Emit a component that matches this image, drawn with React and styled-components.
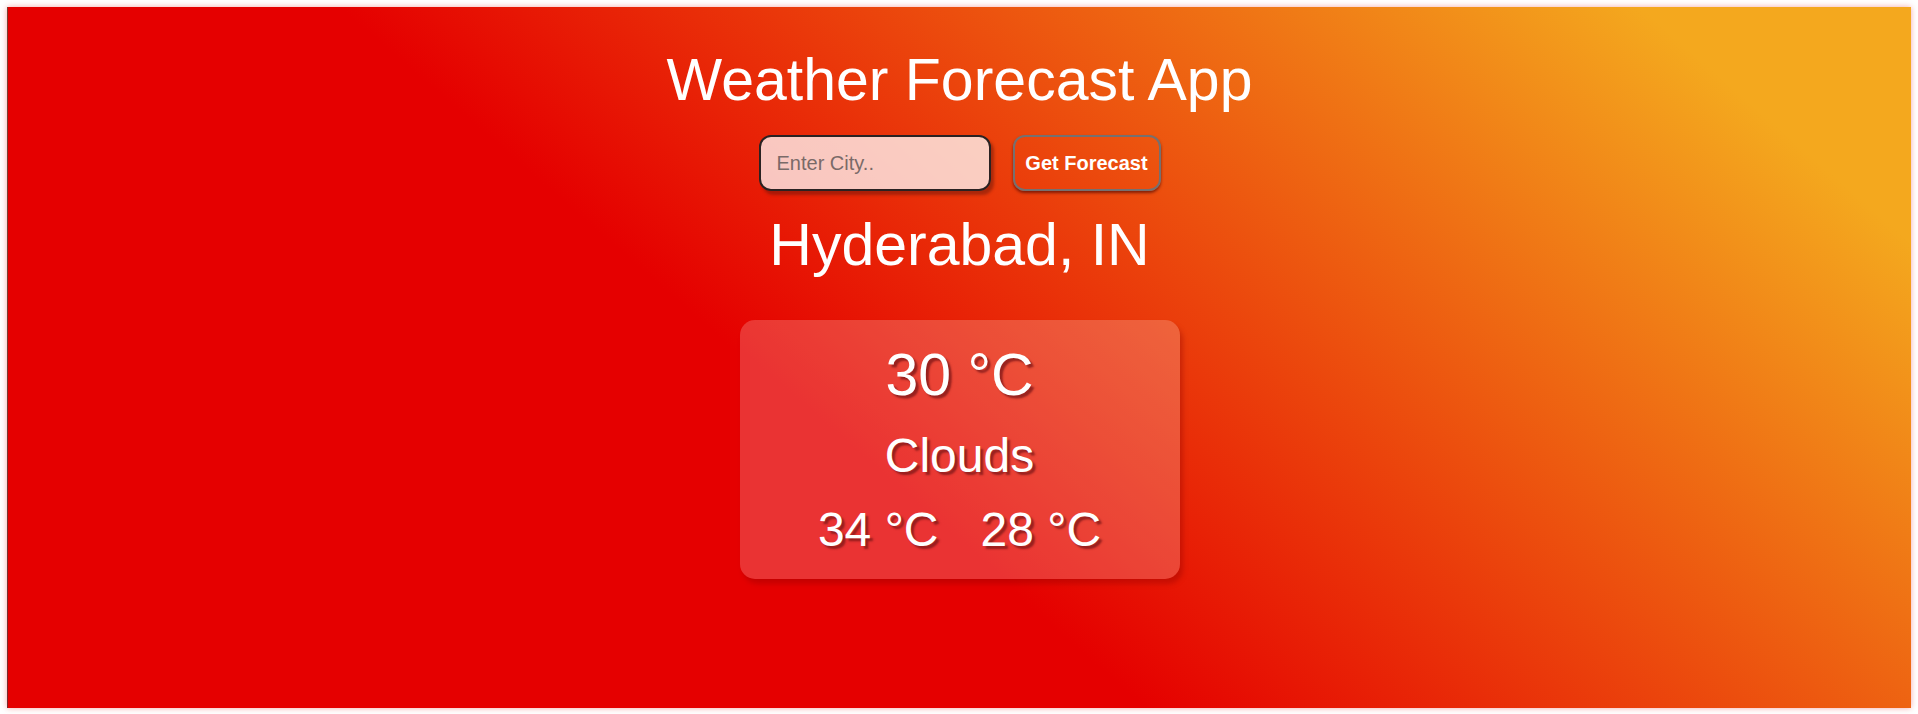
import React, { useState } from 'react';
import styled, { createGlobalStyle } from 'styled-components';

const GlobalStyle = createGlobalStyle`
  body {
    margin: 0;
    font-family: "Liberation Sans", Arial, sans-serif;
    background: #ffffff;
  }
`;

const AppContainer = styled.div`
  margin: 7px;
  height: 701px;
  box-sizing: border-box;
  padding-top: 39px;
  display: flex;
  flex-direction: column;
  align-items: center;
  color: #ffffff;
  background: linear-gradient(41deg, #e50000 42%, #f4a81e 90%);
  box-shadow: 0 0 6px rgba(229, 0, 0, 0.35);
  border-left: 1px solid rgba(70, 20, 60, 0.7);
`;

const Title = styled.h1`
  margin: 0;
  font-size: 59px;
  font-weight: normal;
  line-height: 68px;
`;

const SearchForm = styled.form`
  display: flex;
  gap: 22px;
  margin-top: 21px;
`;

const CityInput = styled.input`
  width: 232px;
  height: 56px;
  box-sizing: border-box;
  padding: 0 16px;
  font-family: "Liberation Sans", Arial, sans-serif;
  font-size: 20px;
  color: #333;
  background: rgba(255, 255, 255, 0.75);
  border: 2px solid #2a2222;
  border-radius: 12px;
  outline: none;
  box-shadow: 3px 4px 3px rgba(90, 20, 10, 0.45);

  &::placeholder {
    color: #7a6a68;
  }
`;

const ForecastButton = styled.button`
  width: 148px;
  height: 56px;
  box-sizing: border-box;
  font-family: "Liberation Sans", Arial, sans-serif;
  font-size: 20px;
  font-weight: bold;
  color: #ffffff;
  background: transparent;
  border: 2px solid #757070;
  border-radius: 12px;
  cursor: pointer;
  box-shadow: 0 2px 3px rgba(60, 0, 0, 0.6);
`;

const CityName = styled.h2`
  margin: 20px 0 0;
  font-size: 59px;
  font-weight: normal;
  line-height: 68px;
`;

const WeatherCard = styled.div`
  margin-top: 41px;
  width: 440px;
  box-sizing: border-box;
  padding: 21px 0 22px;
  display: flex;
  flex-direction: column;
  align-items: center;
  gap: 19px;
  background: rgba(255, 255, 255, 0.2);
  border-radius: 15px;
  box-shadow: 3px 5px 5px rgba(140, 0, 0, 0.35);
`;

const Reading = styled.div`
  font-size: ${(p) => p.size}px;
  line-height: ${(p) => Math.round(p.size * 1.15)}px;
  text-shadow: 3px 3px 2px rgba(130, 25, 25, 0.8);
`;

const MinMaxRow = styled.div`
  display: flex;
  gap: 42px;
`;

const App = () => {
  const [city, setCity] = useState('');

  return (
    <>
      <GlobalStyle />
      <AppContainer>
        <Title>Weather Forecast App</Title>
        <SearchForm onSubmit={(e) => e.preventDefault()}>
          <CityInput
            type="text"
            placeholder="Enter City.."
            value={city}
            onChange={(e) => setCity(e.target.value)}
          />
          <ForecastButton type="submit">Get Forecast</ForecastButton>
        </SearchForm>
        <CityName>Hyderabad, IN</CityName>
        <WeatherCard>
          <Reading size={59}>30 °C</Reading>
          <Reading size={48}>Clouds</Reading>
          <MinMaxRow>
            <Reading size={48}>34 °C</Reading>
            <Reading size={48}>28 °C</Reading>
          </MinMaxRow>
        </WeatherCard>
      </AppContainer>
    </>
  );
};

export default App;
